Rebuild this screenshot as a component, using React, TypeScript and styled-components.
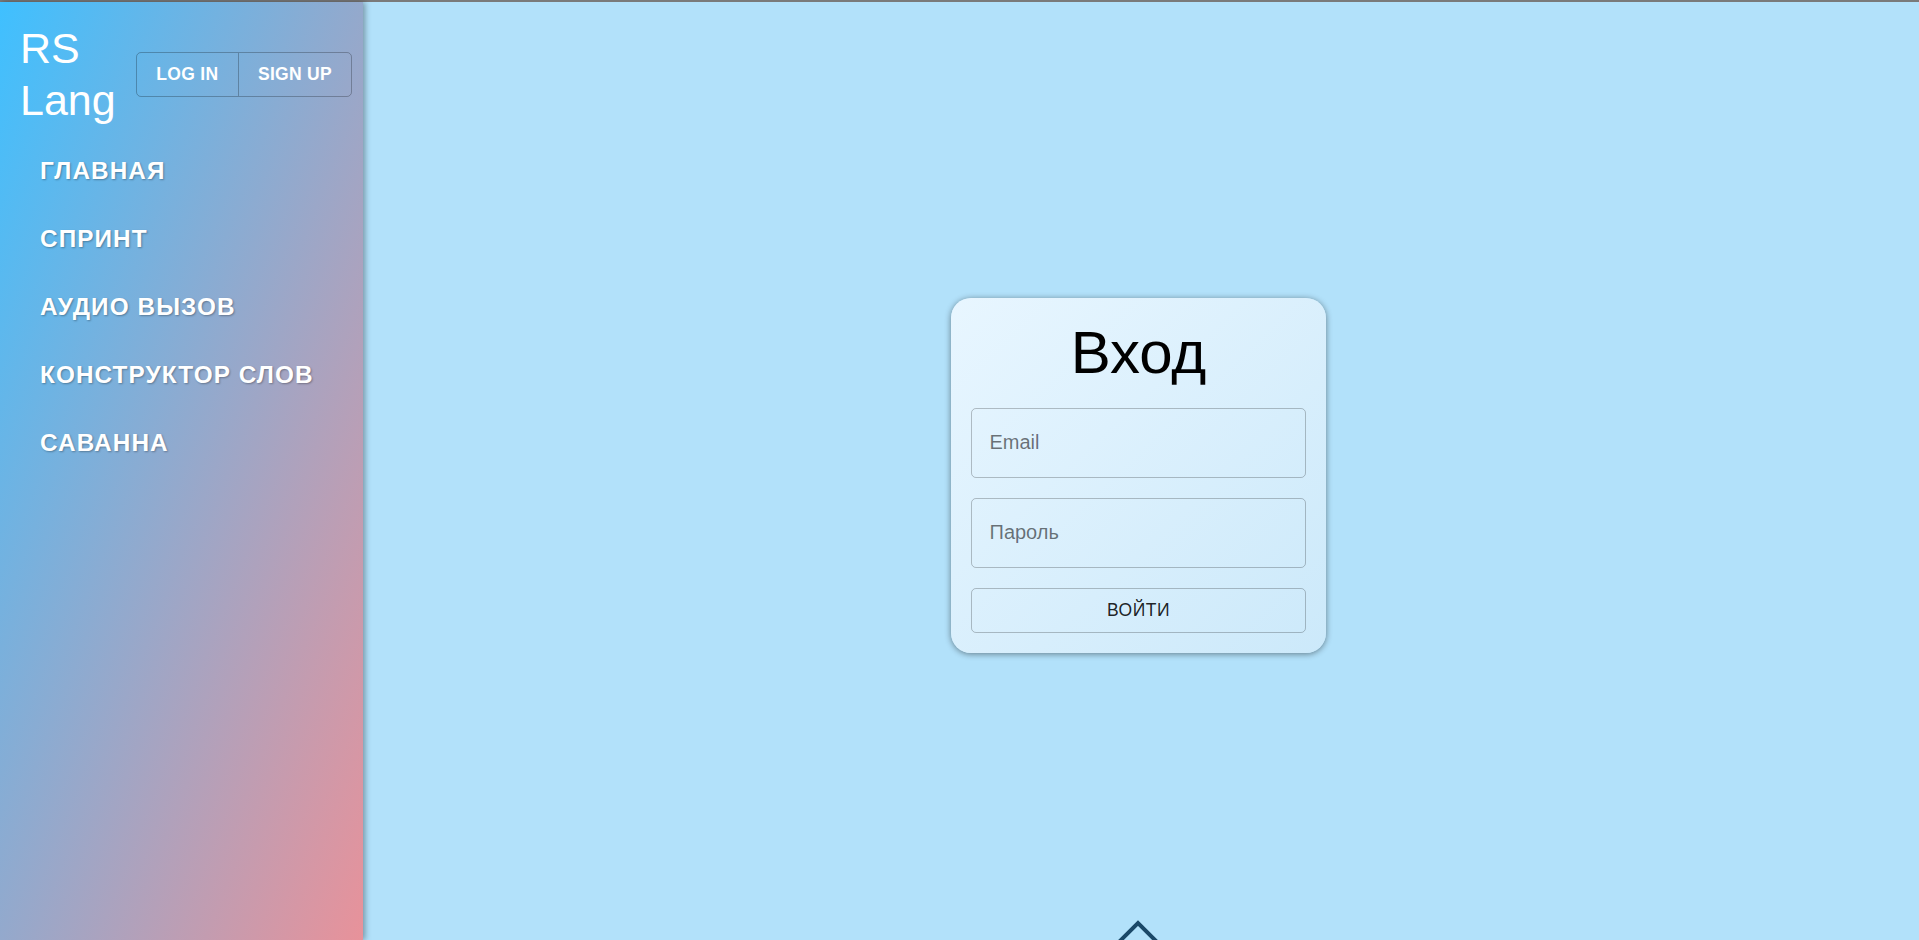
import React from "react";
import styled, { createGlobalStyle } from "styled-components";

const GlobalStyle = createGlobalStyle`
  html, body {
    margin: 0;
    padding: 0;
    height: 100%;
    overflow: hidden;
  }
  body {
    font-family: "Liberation Sans", Arial, sans-serif;
  }
  #root {
    height: 100%;
  }
  * { box-sizing: border-box; }
`;

const Page = styled.div`
  display: flex;
  flex-direction: column;
  height: 100vh;
  background: #b2e1fa;
`;

const TopLine = styled.div`
  height: 2px;
  flex: none;
  background: #7a7a7a;
`;

const Body = styled.div`
  flex: 1;
  display: flex;
  min-height: 0;
`;

const Sidebar = styled.aside`
  width: 363px;
  flex: none;
  background: linear-gradient(to bottom right, #3fc0ff, #e8929a);
  box-shadow: 2px 0 6px rgba(0, 0, 0, 0.35);
  position: relative;
  z-index: 1;
  display: flex;
  flex-direction: column;
`;

const Header = styled.div`
  display: flex;
  align-items: center;
  gap: 19px;
  padding: 20px 0 0 20px;
`;

const Logo = styled.div`
  width: 97px;
  font-size: 43px;
  line-height: 52px;
  color: #ffffff;
`;

const ButtonGroup = styled.div`
  display: flex;
  border: 1px solid rgba(0, 0, 0, 0.25);
  border-radius: 5px;
  height: 45px;
`;

const AuthButton = styled.button<{ $divider?: boolean }>`
  font-family: "Liberation Sans", Arial, sans-serif;
  font-size: 17.5px;
  font-weight: 700;
  letter-spacing: 0.3px;
  color: #ffffff;
  background: transparent;
  border: none;
  border-left: ${(p) => (p.$divider ? "1px solid rgba(0,0,0,0.25)" : "none")};
  padding: 0 19.3px;
  text-transform: uppercase;
  cursor: pointer;
`;

const Nav = styled.nav`
  display: flex;
  flex-direction: column;
  padding-top: 11px;
`;

const NavItem = styled.a`
  display: block;
  padding: 20px 40px;
  font-size: 24.3px;
  line-height: 28px;
  font-weight: 700;
  letter-spacing: 1.1px;
  color: #ffffff;
  text-transform: uppercase;
  text-decoration: none;
  text-shadow: 1px 1px 2px rgba(0, 0, 0, 0.3);
`;

const Main = styled.main`
  flex: 1;
  position: relative;
  display: flex;
  align-items: center;
  justify-content: center;
  padding: 8px 5px 0 0;
`;

const Card = styled.form`
  width: 375px;
  display: flex;
  flex-direction: column;
  gap: 20px;
  padding: 20px;
  border-radius: 20px;
  background: linear-gradient(to bottom right, #e8f6ff, #cce9fa);
  box-shadow: 0 1px 6px rgba(0, 0, 0, 0.45);
`;

const Title = styled.h1`
  margin: 0;
  text-align: center;
  font-size: 60px;
  line-height: 70px;
  font-weight: 400;
  color: #000000;
`;

const Field = styled.input`
  height: 70px;
  width: 100%;
  padding: 0 17.5px;
  font-family: "Liberation Sans", Arial, sans-serif;
  font-size: 20px;
  color: #222;
  background: transparent;
  border: 1px solid rgba(0, 0, 0, 0.23);
  border-radius: 5px;
  outline: none;
  &::placeholder {
    color: rgba(0, 0, 0, 0.55);
  }
`;

const Submit = styled.button`
  height: 45px;
  width: 100%;
  font-family: "Liberation Sans", Arial, sans-serif;
  font-size: 17.5px;
  letter-spacing: 0.5px;
  color: rgba(0, 0, 0, 0.87);
  background: transparent;
  border: 1px solid rgba(0, 0, 0, 0.23);
  border-radius: 5px;
  text-transform: uppercase;
  cursor: pointer;
`;

const ScrollUp = styled.svg`
  position: absolute;
  left: calc(50% - 35px);
  bottom: -11px;
`;

const navItems = ["Главная", "Спринт", "Аудио вызов", "Конструктор слов", "Саванна"];

export default function App() {
  return (
    <>
      <GlobalStyle />
      <Page>
        <TopLine />
        <Body>
          <Sidebar>
            <Header>
              <Logo>RS Lang</Logo>
              <ButtonGroup>
                <AuthButton type="button">Log in</AuthButton>
                <AuthButton type="button" $divider>
                  Sign up
                </AuthButton>
              </ButtonGroup>
            </Header>
            <Nav>
              {navItems.map((item) => (
                <NavItem key={item} href="#">
                  {item}
                </NavItem>
              ))}
            </Nav>
          </Sidebar>
          <Main>
            <Card onSubmit={(e) => e.preventDefault()}>
              <Title>Вход</Title>
              <Field type="email" placeholder="Email" />
              <Field type="password" placeholder="Пароль" />
              <Submit type="submit">Войти</Submit>
            </Card>
            <ScrollUp width="64" height="50" viewBox="0 0 64 50">
              <polyline
                points="6,48 32,22 58,48"
                fill="none"
                stroke="#1a4868"
                strokeWidth="4"
              />
            </ScrollUp>
          </Main>
        </Body>
      </Page>
    </>
  );
}
